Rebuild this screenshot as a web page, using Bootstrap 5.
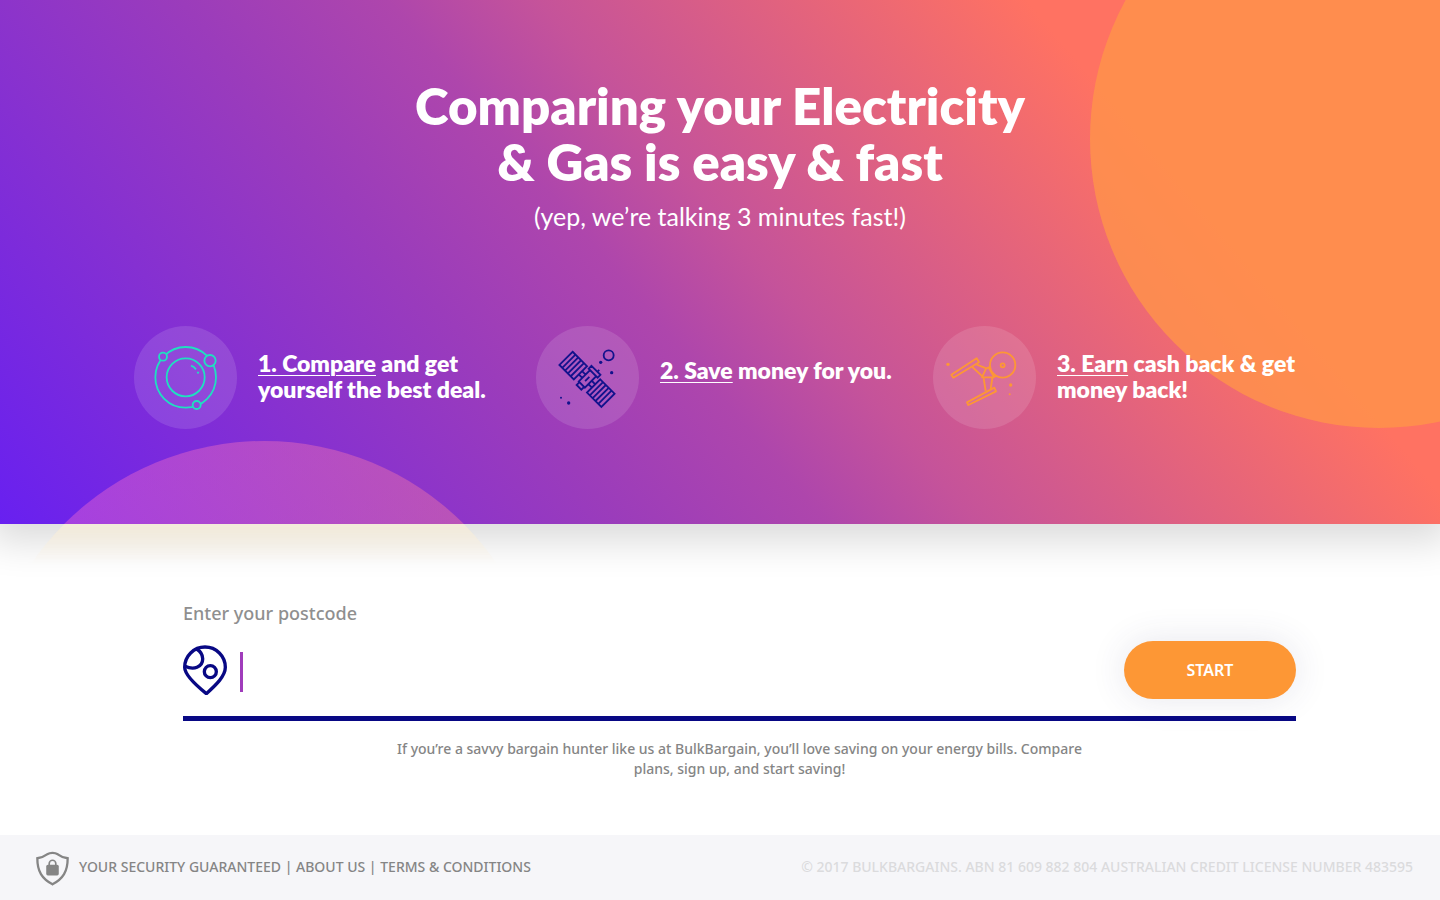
<!DOCTYPE html>
<html lang="en">
<head>
<meta charset="utf-8">
<meta name="viewport" content="width=device-width, initial-scale=1">
<title>BulkBargain – Compare Electricity &amp; Gas</title>
<link rel="stylesheet" href="https://cdn.jsdelivr.net/npm/bootstrap@5.3.0/dist/css/bootstrap.min.css">
<style>
body{font-family:"Noto Sans","Open Sans",sans-serif;color:#858585;overflow-x:hidden}
.hero{background:linear-gradient(50deg,#6820f0 0%,#9b3cbb 33%,#ae46ac 44%,#c5539a 52%,#ff7262 78%);padding:78px 0 95px;box-shadow:0 8px 36px 10px rgba(0,0,0,.14);color:#fff;font-family:Lato,"Open Sans",sans-serif}
.orb-clip{inset:0;overflow:hidden}
.orb-sun{width:578px;height:578px;left:1090px;top:-150px;background:rgba(255,147,74,.8)}
.orb-dawn{width:564px;height:564px;left:-18px;top:441px;background:linear-gradient(90deg,rgba(250,106,212,.4) 10%,rgba(252,129,156,.4) 90%)}
.glow-clip{left:0;right:0;top:100%;height:40px;overflow:hidden;-webkit-mask-image:linear-gradient(#000,transparent);mask-image:linear-gradient(#000,transparent)}
.orb-glow{width:564px;height:564px;left:-18px;top:-83px;background:rgba(255,240,212,.6)}
.hero h1{font-size:51px;line-height:56px;font-weight:800}
.hero .tagline{font-size:25px;line-height:32px;margin-top:10px}
.steps{display:grid;grid-template-columns:402fr 397fr 363fr;padding:0 144px 0 134px;margin-top:94px}
.step-item{display:flex;align-items:center;gap:21px;white-space:nowrap}
.step-disc{width:103px;height:103px;background:rgba(255,255,255,.12);flex:none}
.step-text{font-size:23px;line-height:26px;font-weight:800}
.step-text a{color:#fff;text-decoration-thickness:1px;text-underline-offset:3px}
.signup{padding:75px 144px 56px 183px}
.signup label{font-size:18px;line-height:28px;font-weight:500;color:#8f8f8f}
.field-line{border-bottom:5px solid #080884;padding:14px 0 17px}
.caret-bar{width:3px;height:40px;background:#a03cbb;margin:4px 0 0 13px}
.field-line .form-control{background:none;font-size:26px}
.btn-start{--bs-btn-bg:#fd9735;--bs-btn-hover-bg:#f48a25;--bs-btn-color:#fff;--bs-btn-hover-color:#fff;width:172px;height:58px;font-size:16px;font-weight:600;border:0;box-shadow:0 0 36px rgba(60,60,110,.12)}
.blurb{font-size:14px;line-height:20px;font-weight:500;max-width:720px;margin-top:18px}
.foot{background:#f6f6f9;padding:16px 27px 14px 36px;font-size:14px;font-weight:500}
.foot nav,.foot .legal{padding-bottom:4px}
.foot a{color:inherit;text-decoration:none}
.foot .legal{color:#dbdbdd}
.foot-links{gap:10px}
</style>
</head>
<body>
<header class="hero position-relative">
  <div class="orb-clip position-absolute"><div class="orb-sun position-absolute rounded-circle"></div><div class="orb-dawn position-absolute rounded-circle"></div></div>
  <div class="glow-clip position-absolute"><div class="orb-glow position-absolute rounded-circle"></div></div>
  <div class="position-relative">
    <div class="text-center">
      <h1 class="mb-0">Comparing your Electricity<br>&amp; Gas is easy &amp; fast</h1>
      <p class="tagline mb-0">(yep, we’re talking 3 minutes fast!)</p>
    </div>
    <div class="steps">
      <div class="step-item">
        <div class="step-disc rounded-circle">
          <svg width="103" height="103" viewBox="27 30 309 309" fill="none" stroke="#1fe0c0" stroke-width="5.5" aria-hidden="true">
            <mask id="ringGaps"><rect x="27" y="30" width="309" height="309" fill="#fff" stroke="none"/><g fill="#000" stroke="none"><circle cx="114" cy="122" r="12"/><circle cx="255" cy="134" r="17"/><circle cx="215" cy="267" r="12"/></g></mask>
            <circle cx="182" cy="184" r="91" mask="url(#ringGaps)"/><circle cx="182" cy="184" r="57"/>
            <circle cx="114" cy="122" r="12"/><circle cx="255" cy="134" r="17"/><circle cx="215" cy="267" r="12"/>
            <path d="M198 149q9 3 15 11M217 168l4 4"/>
          </svg>
        </div>
        <div class="step-text pb-1"><a href="#">1. Compare</a> and get<br>yourself the best deal.</div>
      </div>
      <div class="step-item">
        <div class="step-disc rounded-circle">
          <svg width="103" height="103" viewBox="24 30 309 309" fill="none" stroke="#12128c" stroke-width="5.5" aria-hidden="true">
            <g transform="translate(177 190) rotate(45)">
              <path d="M-89-28h61v56h-61zM-77-28v56M-65-28v56M-53-28v56M-41-28v56M28-28h61v56h-61zM40-28v56M52-28v56M64-28v56M76-28v56"/>
              <path d="M-28-7h15M-28 7h15M13-7h15M13 7h15M-13-26h26v48h-26zM-19-38h38v12h-38zM6-38v-8M-10 22v12h20v-12M0-10v18" />
            </g>
            <circle cx="242" cy="118" r="15"/>
            <g fill="#12128c" stroke="none"><circle cx="218" cy="139" r="5"/><circle cx="251" cy="170" r="5"/><circle cx="122" cy="261" r="5"/><circle cx="99" cy="245" r="3"/></g>
          </svg>
        </div>
        <div class="step-text pb-3"><a href="#">2. Save</a> money for you.</div>
      </div>
      <div class="step-item">
        <div class="step-disc rounded-circle">
          <svg width="103" height="103" viewBox="24 30 309 309" fill="none" stroke="#fd9735" stroke-width="5.5" stroke-linejoin="round" aria-hidden="true">
            <circle cx="233" cy="147" r="38"/><circle cx="233" cy="148" r="6"/>
            <path d="M155 127l7 12-77 46-6-9zM208 215l5 11-83 41-4-8z"/>
            <path d="M197 152l-14 6-12 26h35l8-5M155 146l29 11M142 153l31 29M176 187l6 38M202 186l-5 33M191 155l16 28"/>
            <g fill="#fd9735" stroke="none"><circle cx="69" cy="145" r="5"/><circle cx="257" cy="207" r="5"/><circle cx="254" cy="235" r="3"/></g>
          </svg>
        </div>
        <div class="step-text pb-1"><a href="#">3. Earn</a> cash back &amp; get<br>money back!</div>
      </div>
    </div>
  </div>
</header>
<main class="signup">
  <form>
    <label for="postcode" class="d-block">Enter your postcode</label>
    <div class="field-line d-flex align-items-center">
      <svg class="flex-shrink-0" width="44" height="50" viewBox="38 164 132 150" fill="none" stroke="#080884" stroke-width="10" aria-hidden="true">
        <path d="M43 231a61 61 0 0 1 122 0c0 26-27 52-57 79-31-25-65-55-65-79z"/>
        <circle cx="120" cy="244" r="18"/><path d="M79 176c24 15 24 45 1 55-12 5-25 2-36-3"/>
      </svg>
      <span class="caret-bar flex-shrink-0"></span>
      <input id="postcode" name="postcode" type="text" class="form-control border-0 shadow-none" inputmode="numeric">
      <button type="submit" class="btn btn-start rounded-pill flex-shrink-0">START</button>
    </div>
    <p class="blurb text-center mx-auto mb-0">If you’re a savvy bargain hunter like us at BulkBargain, you’ll love saving on your energy bills. Compare plans, sign up, and start saving!</p>
  </form>
</main>
<footer class="foot d-flex justify-content-between align-items-center">
  <div class="foot-links d-flex align-items-center">
    <svg width="33" height="35" viewBox="46 65 100 104" aria-hidden="true">
      <path d="M50 86c17-2 22-6 30-12 9-6 23-6 32 0 8 6 14 10 30 12 0 40-14 62-46 79C64 148 50 126 50 86z" fill="none" stroke="#858585" stroke-width="7"/>
      <rect x="77" y="106" width="38" height="32" rx="5" fill="#858585"/><path d="M86 107v-5a10 10 0 0 1 20 0v5" fill="none" stroke="#858585" stroke-width="5"/>
    </svg>
    <nav><a href="#">YOUR SECURITY GUARANTEED</a> | <a href="#">ABOUT US</a> | <a href="#">TERMS &amp; CONDITIONS</a></nav>
  </div>
  <div class="legal">© 2017 BULKBARGAINS. ABN 81 609 882 804 AUSTRALIAN CREDIT LICENSE NUMBER 483595</div>
</footer>
<script src="https://cdn.jsdelivr.net/npm/bootstrap@5.3.0/dist/js/bootstrap.bundle.min.js"></script>
</body>
</html>
